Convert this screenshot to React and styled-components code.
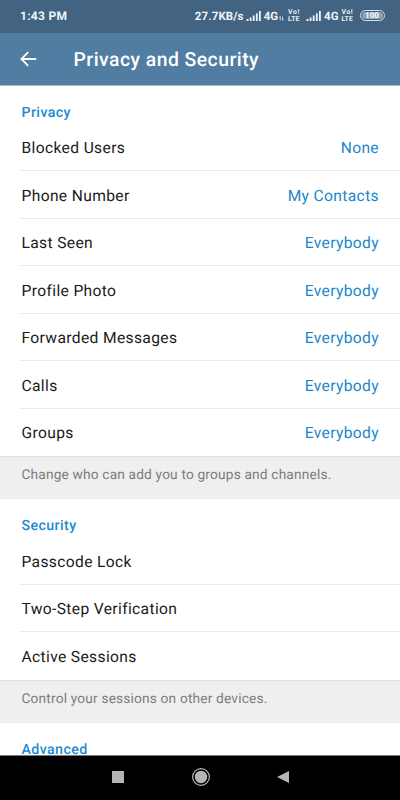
import React from "react";
import styled, { createGlobalStyle } from "styled-components";

const GlobalStyle = createGlobalStyle`
  * { box-sizing: border-box; }
  body { margin: 0; background: #fff; font-family: Roboto, "Liberation Sans", sans-serif; text-rendering: geometricPrecision; }
`;

const Screen = styled.div`
  width: 400px;
  height: 800px;
  display: flex;
  flex-direction: column;
  overflow: hidden;
  background: #fff;
`;

const StatusBar = styled.header`
  height: 33px;
  flex: none;
  display: flex;
  align-items: center;
  justify-content: space-between;
  padding: 0 15.5px 2px 20px;
  background: #426382;
  color: #f0f4f7;
`;

const StatusText = styled.span`
  font-size: ${(p) => p.$size || 11.5}px;
  font-weight: 700;
  line-height: 16px;
  letter-spacing: ${(p) => p.$spacing || 0}px;
  white-space: nowrap;
`;

const StatusIcons = styled.svg`
  display: block;
  flex: none;
`;

const SignalIcon = styled(StatusIcons)`
  margin: 0 2px 0 ${(p) => p.$before}px;
`;

const StatusGroup = styled.div`
  display: flex;
  align-items: center;
`;

const Toolbar = styled.nav`
  height: 53px;
  flex: none;
  display: flex;
  align-items: center;
  padding: 0 20px 0 19px;
  background: #517da2;
  border-bottom: 1px solid #a9b9c8;
  color: #fff;
`;

const Title = styled.h1`
  margin: 1px 0 0 35.5px;
  font-size: 19.4px;
  font-weight: 500;
  line-height: 24px;
  letter-spacing: 0.46px;
`;

const Content = styled.main`
  flex: 1;
  min-height: 0;
  overflow: hidden;
`;

const SectionTitle = styled.h2`
  margin: 0;
  height: ${(p) => p.$height}px;
  padding: 17px 21.5px 0;
  font-size: 14.2px;
  font-weight: 500;
  line-height: 20px;
  letter-spacing: 0.4px;
  color: #1c8bd1;
`;

const Row = styled.div`
  height: 47.5px;
  margin-left: 20px;
  padding: 3px 21px 0 1.5px;
  display: flex;
  align-items: center;
  justify-content: space-between;
  border-bottom: 1px solid ${(p) => (p.$last ? "transparent" : "#ebebeb")};
  font-size: 15.6px;
  line-height: 20px;
  letter-spacing: 0.36px;
  color: #1a1a1a;
`;

const Value = styled.span`
  color: #1c86cb;
`;

const Note = styled.p`
  margin: 0;
  height: ${(p) => p.$height}px;
  padding: 8px 21.5px 0;
  background: #efefef;
  border-top: 1px solid #e2e2e2;
  font-size: 13.7px;
  line-height: 20px;
  letter-spacing: 0.18px;
  color: #7c7c7c;
`;

const NavigationBar = styled.footer`
  height: 45px;
  flex: none;
  background: #000;
  border-top: 1px solid #777;
  display: flex;
`;

function Signal({ before }) {
  return (
    <SignalIcon $before={before} width="16" height="12" viewBox="0 0 16 12" fill="#f0f4f7">
      <rect x="0.5" y="9" width="2" height="2" />
      <rect x="3.7" y="7.5" width="1.8" height="3.5" />
      <rect x="6.8" y="5.5" width="1.8" height="5.5" />
      <rect x="9.9" y="3.3" width="1.8" height="7.7" />
      <rect x="13" y="1" width="1.8" height="10" />
    </SignalIcon>
  );
}

const VolteBox = styled.div`
  display: flex;
  flex-direction: column;
  width: 13px;
  margin: 0 ${(p) => p.$after}px 0 ${(p) => p.$before}px;
  font-size: 6.8px;
  font-weight: 700;
  white-space: nowrap;
`;

const VolteLine = styled.span`
  line-height: 7px;
  height: 7px;
  letter-spacing: ${(p) => p.$spacing || 0}px;
`;

const Battery = styled.div`
  width: 25px;
  height: 11px;
  border: 1px solid #d8e0e7;
  border-radius: 6px;
  padding: 1px;
  display: flex;
`;

const BatteryFill = styled.div`
  flex: 1;
  border-radius: 4px;
  background: #90a3b5;
  color: #fff;
  font-size: 8px;
  font-weight: 700;
  line-height: 7.5px;
  text-align: center;
`;

const DataMark = styled(StatusIcons)`
  margin: 5px 0 0 1px;
`;

function Volte({ before, after }) {
  return (
    <VolteBox $before={before} $after={after}>
      <VolteLine $spacing={0.6}>Vo!</VolteLine>
      <VolteLine $spacing={0.2}>LTE</VolteLine>
    </VolteBox>
  );
}

const privacy = [
  ["Blocked Users", "None"],
  ["Phone Number", "My Contacts"],
  ["Last Seen", "Everybody"],
  ["Profile Photo", "Everybody"],
  ["Forwarded Messages", "Everybody"],
  ["Calls", "Everybody"],
  ["Groups", "Everybody"],
];
const security = [["Passcode Lock"], ["Two-Step Verification"], ["Active Sessions"]];

function Rows({ items }) {
  return items.map(([label, value], i) => (
    <Row key={label} $last={i === items.length - 1}>
      <span>{label}</span>
      {value && <Value>{value}</Value>}
    </Row>
  ));
}

export default function App() {
  return (
    <Screen>
      <GlobalStyle />
      <StatusBar>
        <StatusText $size={12} $spacing={0.3}>1:43 PM</StatusText>
        <StatusGroup>
          <StatusText $spacing={0.1}>27.7KB/s</StatusText>
          <Signal before={2} />
          <StatusText>4G</StatusText>
          <DataMark width="5" height="5" viewBox="0 0 5 5" fill="none" stroke="#c3cfda" strokeWidth="1">
            <path d="M1.3 4.5v-4L.3 1.8M3.5.5v4l1-1.3" />
          </DataMark>
          <Volte before={4} after={0} />
          <Signal before={5} />
          <StatusText>4G</StatusText>
          <Volte before={3} after={5} />
          <Battery>
            <BatteryFill>100</BatteryFill>
          </Battery>
        </StatusGroup>
      </StatusBar>
      <Toolbar>
        <StatusIcons width="19" height="18" viewBox="0 0 19 18" fill="none" stroke="#fff" strokeWidth="1.8">
          <path d="M17.2 9H2.4M9.2 2.2 2.4 9l6.8 6.8" />
        </StatusIcons>
        <Title>Privacy and Security</Title>
      </Toolbar>
      <Content>
        <SectionTitle $height={37.5}>Privacy</SectionTitle>
        <Rows items={privacy} />
        <Note $height={43}>Change who can add you to groups and channels.</Note>
        <SectionTitle $height={38}>Security</SectionTitle>
        <Rows items={security} />
        <Note $height={43}>Control your sessions on other devices.</Note>
        <SectionTitle $height={38}>Advanced</SectionTitle>
      </Content>
      <NavigationBar>
        <StatusIcons width="400" height="44" viewBox="0 0 400 44" fill="#b5b5b5">
          <rect x="112" y="15" width="12" height="12" />
          <circle cx="201" cy="21" r="6.2" />
          <circle cx="201" cy="21" r="8.4" fill="none" stroke="#b5b5b5" strokeWidth="1.2" />
          <path d="M277 21 289 15v12z" />
        </StatusIcons>
      </NavigationBar>
    </Screen>
  );
}
